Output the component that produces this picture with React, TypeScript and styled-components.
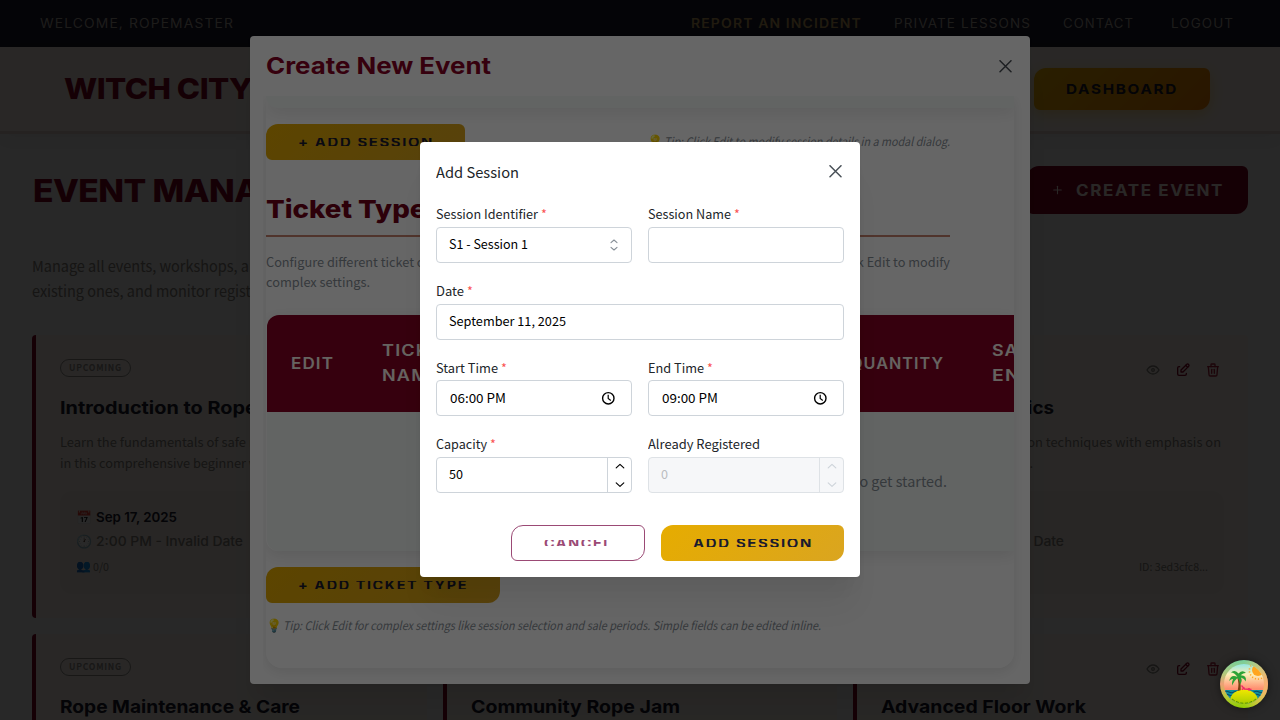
import React, { useLayoutEffect, useRef, useState } from 'react';
import styled, { createGlobalStyle, css } from 'styled-components';
import { TbEye, TbEdit, TbTrash, TbPlus } from 'react-icons/tb';

const display = "Inter, 'Open Sans', sans-serif";
const body = "'Noto Sans CJK SC', 'Noto Sans', sans-serif";

const Global = createGlobalStyle`
  * { box-sizing: border-box; }
  body { margin: 0; background: #fafafa; font-family: ${body}; }
  button { font: inherit; cursor: pointer; }
`;

/* Text stretched horizontally so that its label takes a set width. */
const FitOuter = styled.span<{ $w: number }>`
  display: inline-block;
  width: ${(p) => p.$w}px;
  text-align: left;
  white-space: nowrap;
  flex: none;
`;
const FitInner = styled.span`
  display: inline-block;
  transform-origin: 0 50%;
`;
function Fit({ w, tail, children }: { w: number; tail?: string; children: React.ReactNode }) {
  const ref = useRef<HTMLSpanElement>(null);
  const [scale, setScale] = useState(1);
  useLayoutEffect(() => {
    if (ref.current && ref.current.offsetWidth) {
      setScale(w / (ref.current.getBoundingClientRect().width || w));
    }
  }, [w]);
  return (
    <FitOuter $w={w}>
      <FitInner style={{ transform: `scaleX(${scale})` }}>
        <span ref={ref}>{children}</span>
        {tail}
      </FitInner>
    </FitOuter>
  );
}

const Page = styled.div`
  position: relative;
  width: 1280px;
  height: 720px;
  overflow: hidden;
  background: #fafafa;
`;
const Overlay = styled.div`
  position: absolute;
  inset: 0;
  display: flex;
  justify-content: center;
  align-items: center;
  background: rgba(0, 0, 0, 0.6);
`;
const UpperOverlay = styled(Overlay)`
  padding-bottom: 1px;
`;

/* ---------- page ---------- */
const UtilityBar = styled.div`
  height: 47px;
  padding: 0 46px 0 40px;
  display: flex;
  align-items: center;
  justify-content: space-between;
  background: #1a1a2e;
  color: #b8b0a8;
  font: 400 12.5px ${display};
  letter-spacing: 1px;
`;
const UtilityLinks = styled.nav`
  display: flex;
  align-items: center;
`;
const UtilityLink = styled.a<{ $gap?: number; $strong?: boolean }>`
  margin-left: ${(p) => p.$gap ?? 0}px;
  ${(p) => p.$strong && css`color: #c9a961; font-weight: 600;`}
`;
const Header = styled.header`
  height: 87px;
  padding: 0 70px 0 64px;
  display: flex;
  align-items: center;
  justify-content: space-between;
  background: #fff8f0;
  border-bottom: 3px solid #ebd6d2;
  box-shadow: 0 2px 20px rgba(0, 0, 0, 0.08);
`;
const Logo = styled.div`
  margin-top: -2px;
  font: 800 29px ${display};
  letter-spacing: -0.5px;
  color: #880124;
`;
const Dashboard = styled.button`
  width: 176px;
  height: 42px;
  padding: 0 32px;
  border: 0;
  border-radius: 12px 6px 12px 6px;
  background: linear-gradient(135deg, #ffbf00, #ff8c00);
  box-shadow: 0 4px 15px rgba(255, 191, 0, 0.4);
  color: #1a1a2e;
  font: 700 13.5px ${display};
  letter-spacing: 1.5px;
  text-align: left;
`;
const Main = styled.main`
  padding: 32px 32px 0;
`;
const TitleRow = styled.div`
  height: 48px;
  display: flex;
  align-items: center;
  justify-content: space-between;
`;
const PageTitle = styled.h1`
  margin: 0 0 0 1px;
  font: 800 31px ${display};
  letter-spacing: -0.5px;
  color: #880124;
`;
const CreateButton = styled.button`
  width: 221px;
  height: 48px;
  padding: 0 24px;
  display: flex;
  align-items: center;
  gap: 12px;
  border: 0;
  border-radius: 12px 6px 12px 6px;
  background: #880124;
  color: #fff8f0;
  font: 700 15.8px ${display};
  letter-spacing: 1.5px;
`;
const Intro = styled.p`
  margin: 39px 0 32px;
  font-size: 15px;
  line-height: 25px;
  color: #8b8680;
`;
const Line = styled.div`
  white-space: nowrap;
`;
const CardGrid = styled.div`
  display: grid;
  grid-template-columns: repeat(3, 1fr);
  gap: 16px;
`;
const Card = styled.article`
  height: 283px;
  padding: 24px;
  border-left: 4px solid #880124;
  border-radius: 4px;
  background: #fff8f0;
`;
const CardTop = styled.div`
  display: flex;
  justify-content: space-between;
  align-items: flex-start;
  height: 22px;
`;
const Badge = styled.span`
  height: 18px;
  padding: 0 8px;
  border: 1px solid #9a9490;
  border-radius: 9px;
  color: #9a9490;
  font-size: 9px;
  font-weight: 700;
  line-height: 15.5px;
  letter-spacing: 0.8px;
`;
const CardActions = styled.div`
  display: flex;
  align-items: center;
  gap: 14px;
  height: 22px;
  margin-right: 3px;
`;
const ActionIcon = styled.span<{ $color: string }>`
  display: flex;
  color: ${(p) => p.$color};
`;
const CardTitle = styled.h3`
  margin: 13.5px 0 10.5px;
  font: 700 17.6px/26px ${display};
  color: #1a1a2e;
  white-space: nowrap;
`;
const CardText = styled.p`
  height: 42px;
  margin: 0 0 17.5px;
  font-size: 12.6px;
  line-height: 21px;
  color: #8b8680;
`;
const Details = styled.div`
  padding: 14.5px 16px 15px;
  border-radius: 12px;
  background: #faf0e8;
`;
const DetailRow = styled.div<{ $kind: 'date' | 'time' | 'count' }>`
  display: flex;
  align-items: center;
  height: ${(p) => (p.$kind === 'count' ? 26 : 24)}px;
  gap: ${(p) => (p.$kind === 'count' ? 1 : 4)}px;
  ${(p) => p.$kind === 'date' && css`font: 600 13px ${display}; color: #1a1a2e;`}
  ${(p) => p.$kind === 'time' && css`font: 500 13px ${display}; color: #8b8680;`}
  ${(p) => p.$kind === 'count' && css`font-size: 11px; color: #8b8680;`}
`;
const Emoji = styled.span<{ $size?: number }>`
  width: 16px;
  flex: none;
  font: normal ${(p) => p.$size ?? 13}px 'Noto Color Emoji', sans-serif;
  letter-spacing: 0;
`;
const Push = styled.span`
  margin-left: auto;
`;

type EventInfo = {
  title: string;
  titleW: number;
  lines: { text: string; w: number; tail?: string }[];
  titleTail?: string;
};
const events: EventInfo[] = [
  {
    title: 'Introduction to Rop', titleW: 185, titleTail: 'e Bondage',
    lines: [
      { text: 'Learn the fundamentals of safe', w: 186, tail: ' rope bondage' },
      { text: 'in this comprehensive beginner', w: 186, tail: ' workshop.' },
    ],
  },
  { title: 'Midnight Rope Performance', titleW: 250, lines: [{ text: 'An evening of rope artistry', w: 160 }] },
  {
    title: 'Suspension Basics', titleW: 173,
    lines: [
      { text: 'Introduction to suspension techniques with emphasis on', w: 340 },
      { text: 'safety and body mechanics.', w: 152 },
    ],
  },
  { title: 'Rope Maintenance & Care', titleW: 240, lines: [] },
  { title: 'Community Rope Jam', titleW: 209, lines: [] },
  { title: 'Advanced Floor Work', titleW: 205, lines: [] },
];

function EventCard({ e }: { e: EventInfo }) {
  return (
    <Card>
      <CardTop>
        <Badge><Fit w={53}>UPCOMING</Fit></Badge>
        <CardActions>
          <ActionIcon $color="#8b8680"><TbEye size={16} /></ActionIcon>
          <ActionIcon $color="#880124"><TbEdit size={16} /></ActionIcon>
          <ActionIcon $color="#b0203c"><TbTrash size={16} /></ActionIcon>
        </CardActions>
      </CardTop>
      <CardTitle><Fit w={e.titleW} tail={e.titleTail}>{e.title}</Fit></CardTitle>
      <CardText>
        {e.lines.map((l) => (
          <Line key={l.text}><Fit w={l.w} tail={l.tail}>{l.text}</Fit></Line>
        ))}
      </CardText>
      <Details>
        <DetailRow $kind="date"><Emoji>📅</Emoji><Fit w={81}>Sep 17, 2025</Fit></DetailRow>
        <DetailRow $kind="time"><Emoji>🕐</Emoji><Fit w={147}>2:00 PM - Invalid Date</Fit></DetailRow>
        <DetailRow $kind="count">
          <Emoji $size={12}>👥</Emoji><Fit w={16}>0/0</Fit>
          <Push><Fit w={69}>ID: 3ed3cfc8...</Fit></Push>
        </DetailRow>
      </Details>
    </Card>
  );
}

/* ---------- shared dialog parts ---------- */
const Dialog = styled.section<{ $w: number; $h: number }>`
  width: ${(p) => p.$w}px;
  height: ${(p) => p.$h}px;
  padding: 0 16px 16px;
  border-radius: 4px;
  background: #fff;
  box-shadow: 0 1px 3px rgba(0, 0, 0, 0.05), 0 36px 28px -7px rgba(0, 0, 0, 0.05),
    0 17px 17px -7px rgba(0, 0, 0, 0.04);
`;
const DialogHeader = styled.div<{ $large?: boolean }>`
  height: 60px;
  padding: 0 2.5px ${(p) => (p.$large ? 0 : 1.5)}px 0;
  display: flex;
  align-items: center;
  justify-content: space-between;
  font: 400 14.4px ${body};
  color: #212529;
  ${(p) => p.$large && css`font: 700 23px ${display}; color: #880124;`}
`;
function CloseIcon() {
  return (
    <svg width="13" height="13" viewBox="0 0 13 13" fill="none" stroke="#495057" strokeWidth="1.5" strokeLinecap="round">
      <path d="M1 0.7L12 11.7M12 0.7L1 11.7" />
    </svg>
  );
}
const Action = styled.button<{ $w: number; $outline?: boolean }>`
  display: block;
  width: ${(p) => p.$w}px;
  height: 36px;
  padding: ${(p) => (p.$outline ? '14px 31.5px' : '14px 32px')};
  border: ${(p) => (p.$outline ? '1px solid #9b4a75' : '0')};
  border-radius: 12px 6px 12px 6px;
  background: ${(p) => (p.$outline ? '#fff' : 'linear-gradient(135deg, #e6ac00, #daa520)')};
  color: ${(p) => (p.$outline ? '#9b4a75' : '#1a1a2e')};
`;
const ActionLabel = styled.span<{ $h: number }>`
  display: flex;
  align-items: center;
  height: ${(p) => p.$h}px;
  overflow: hidden;
  font: 700 13.5px/14px ${display};
  letter-spacing: 1.5px;
`;

/* ---------- create event dialog ---------- */
const Paper = styled.div`
  height: 572px;
  border-radius: 0 0 16px 16px;
  overflow: hidden;
  background: #fff;
`;
const PaperShadow = styled.div`
  border-radius: 0 0 16px 16px;
  box-shadow: 0 4px 12px rgba(0, 0, 0, 0.09);
  clip-path: inset(0 -16px -16px -3px);
`;
const SessionTableEnd = styled.div`
  height: 12px;
  border-radius: 0 0 0 12px;
  background: #f5faf8;
  box-shadow: 0 4px 15px rgba(0, 0, 0, 0.1);
`;
const Tip = styled.div`
  display: flex;
  align-items: center;
  gap: 1px;
  height: 20px;
  font-size: 11.8px;
  line-height: 20px;
  font-style: italic;
  color: #868e96;
`;
const SessionRow = styled.div`
  width: 684px;
  margin-top: 16px;
  display: flex;
  align-items: center;
  justify-content: space-between;
  ${Tip} { margin-bottom: 2px; }
`;
const SectionTitle = styled.h2`
  width: 684px;
  margin: 29px 0 14.5px;
  padding-bottom: 6px;
  border-bottom: 2px solid #c8836f;
  font: 800 25px/40px ${display};
  color: #700018;
`;
const SectionText = styled.p`
  width: 684px;
  margin: 0 0 23.5px;
  font-size: 12.6px;
  line-height: 20px;
  color: #868e96;
`;
const SplitLine = styled.div`
  display: flex;
  justify-content: space-between;
`;
const TicketTable = styled.div`
  margin-left: 1px;
  border-radius: 12px 0 0 12px;
  overflow: hidden;
`;
const TableShadow = styled.div`
  margin-bottom: 16px;
  border-radius: 12px 0 0 12px;
  box-shadow: 0 4px 15px rgba(0, 0, 0, 0.1);
`;
const TableHead = styled.div`
  height: 97px;
  display: grid;
  grid-template-columns: 91px 468px 142px 120px;
  align-items: center;
  padding: 0 0 1px 24px;
  background: #880124;
  color: #fff8f0;
  font: 600 15.6px/25px ${display};
  letter-spacing: 1px;
`;
const TableEmpty = styled.div`
  height: 139px;
  padding: 0 67px 2px 0;
  display: flex;
  align-items: center;
  justify-content: flex-end;
  background: #f5faf8;
  color: #868e96;
  font-size: 14.4px;
`;
const BottomTip = styled.div`
  margin-top: 12px;
`;

/* ---------- add session dialog ---------- */
const Form = styled.div`
  padding-top: 3.3px;
  display: grid;
  grid-template-columns: 1fr 1fr;
  gap: 19px 16px;
`;
const Field = styled.div<{ $full?: boolean }>`
  grid-column: ${(p) => (p.$full ? '1 / -1' : 'auto')};
`;
const Label = styled.div`
  height: 21.7px;
  display: flex;
  gap: 3px;
  font-size: 12.6px;
  line-height: 18px;
  color: #212529;
`;
const Star = styled.span`
  color: #fa5252;
`;
const Control = styled.div<{ $disabled?: boolean; $time?: boolean }>`
  height: 36px;
  display: flex;
  align-items: center;
  justify-content: space-between;
  padding-left: ${(p) => (p.$time ? 13 : 12)}px;
  border: 1px solid ${(p) => (p.$disabled ? '#dee2e6' : '#ced4da')};
  border-radius: 4px;
  background: ${(p) => (p.$disabled ? '#f6f7f9' : '#fff')};
  color: ${(p) => (p.$disabled ? '#bbbdc0' : '#000')};
  font-size: 12.6px;
  line-height: 32px;
`;
const ControlValue = styled.span`
  display: flex;
  margin-bottom: 1.3px;
`;
const ControlIcon = styled.svg<{ $right: number }>`
  margin-right: ${(p) => p.$right}px;
`;
const Stepper = styled.div<{ $disabled?: boolean }>`
  width: 24px;
  height: 34px;
  display: flex;
  align-items: center;
  justify-content: center;
  border-left: 1px solid ${(p) => (p.$disabled ? '#dee2e6' : '#ced4da')};
  color: ${(p) => (p.$disabled ? '#ced4da' : '#000')};
`;
const Footer = styled.div`
  margin-top: 32px;
  display: flex;
  justify-content: flex-end;
  gap: 16px;
`;

function Chevrons() {
  return (
    <ControlIcon $right={12} width="10" height="14" viewBox="0 0 10 14" fill="none" stroke="#868e96" strokeWidth="1.1" strokeLinecap="round" strokeLinejoin="round">
      <path d="M2 4.7L5 2L8 4.7M2 9.3L5 12L8 9.3" />
    </ControlIcon>
  );
}
function Clock() {
  return (
    <ControlIcon $right={16} width="14" height="14" viewBox="0 0 14 14" fill="none" stroke="#000" strokeWidth="1.4">
      <circle cx="7.3" cy="7.3" r="5.7" />
      <path d="M7.2 3.8V7.5L9.8 9.4" strokeWidth="1.2" />
    </ControlIcon>
  );
}
function Steps({ disabled }: { disabled?: boolean }) {
  return (
    <Stepper $disabled={disabled}>
      <svg width="10" height="26" viewBox="0 0 10 26" fill="none" stroke="currentColor" strokeWidth="1.15" strokeLinecap="round" strokeLinejoin="round">
        <path d="M1.2 5.9L5 2.3L8.8 5.9M1.2 20.8L5 24.3L8.8 20.8" />
      </svg>
    </Stepper>
  );
}
function FormLabel({ w, text, required }: { w: number; text: string; required?: boolean }) {
  return <Label><Fit w={w}>{text}</Fit>{required && <Star>*</Star>}</Label>;
}

/* ---------- tropical badge ---------- */
const IslandButton = styled.div`
  position: absolute;
  right: 12px;
  bottom: 12px;
  width: 48px;
  height: 48px;
  border-radius: 50%;
  box-shadow: 0 0 8px rgba(0, 0, 0, 0.5);
`;
function Island() {
  return (
    <svg width="48" height="48" viewBox="0 0 48 48">
      <defs>
        <linearGradient id="ring" x1="0" y1="0" x2="0" y2="1">
          <stop offset="0" stopColor="#74cf9c" />
          <stop offset="0.3" stopColor="#b6c87a" />
          <stop offset="0.5" stopColor="#efa076" />
          <stop offset="0.75" stopColor="#b8c83c" />
          <stop offset="1" stopColor="#8fce00" />
        </linearGradient>
        <linearGradient id="ringRight" x1="0" y1="0" x2="1" y2="0">
          <stop offset="0.5" stopColor="#ffce6e" stopOpacity="0" />
          <stop offset="1" stopColor="#ffb070" stopOpacity="0.75" />
        </linearGradient>
        <linearGradient id="sky" x1="0" y1="0" x2="0" y2="1">
          <stop offset="0" stopColor="#6be2f2" />
          <stop offset="0.3" stopColor="#fdf0b8" />
          <stop offset="0.6" stopColor="#ff8f70" />
        </linearGradient>
        <linearGradient id="sand" x1="0" y1="0" x2="0" y2="1">
          <stop offset="0" stopColor="#f2e800" />
          <stop offset="1" stopColor="#7dbd00" />
        </linearGradient>
        <clipPath id="disc"><circle cx="24" cy="24" r="20" /></clipPath>
      </defs>
      <circle cx="24" cy="24" r="24" fill="url(#ring)" />
      <circle cx="24" cy="24" r="24" fill="url(#ringRight)" />
      <g clipPath="url(#disc)">
        <rect width="48" height="48" fill="url(#sky)" />
        <circle cx="38" cy="10.5" r="8.6" fill="none" stroke="#ffa51e" strokeWidth="1.6" strokeDasharray="1.1 2" />
        <circle cx="38" cy="10" r="6" fill="#ffa51e" />
        <rect y="30" width="48" height="18" fill="#0d8f9e" />
        <path d="M4 32q2.5-1.4 5 0t5 0 5 0 5 0 5 0 5 0 5 0 5 0M4 35q2.5-1.4 5 0t5 0 5 0 5 0 5 0 5 0 5 0 5 0" fill="none" stroke="#0a4d68" strokeWidth="1.1" />
        <ellipse cx="24" cy="41" rx="14" ry="11.5" fill="url(#sand)" />
        <path d="M12 39Q24 47.5 36 39" fill="none" stroke="#4c8b00" strokeWidth="0.9" strokeDasharray="3 1.6" />
      </g>
      <path d="M17 17Q19.5 23 17.6 31L20.6 30.3Q21.2 22 18.4 16.5Z" fill="#7b3f12" />
      <path d="M21.5 25.5L24.5 29L31.5 29.5M22 29.8L24.5 27.5M29 31V28" fill="none" stroke="#ee2c68" strokeWidth="1.3" />
      <path d="M17.5 17Q11 13.5 9 21Q12 18.5 13 19.2Q11.5 22 12 25.5Q14.2 20.5 17.5 18Q19.5 20 20 24.5Q23 20.5 20.8 17.6Q24.5 18.5 25.8 21.5Q27 15 20.5 15.2Q24 12.6 26 13Q22.5 9.3 18.5 13.6Q15.5 9.3 11 12.4Q14.8 12.6 17.5 17Z" fill="#2da336" />
    </svg>
  );
}

export default function App() {
  return (
    <Page>
      <Global />
      <UtilityBar>
        <Fit w={194}>WELCOME, ROPEMASTER</Fit>
        <UtilityLinks>
          <UtilityLink $strong><Fit w={171}>REPORT AN INCIDENT</Fit></UtilityLink>
          <UtilityLink $gap={32}><Fit w={137}>PRIVATE LESSONS</Fit></UtilityLink>
          <UtilityLink $gap={32}><Fit w={71}>CONTACT</Fit></UtilityLink>
          <UtilityLink $gap={37}><Fit w={63}>LOGOUT</Fit></UtilityLink>
        </UtilityLinks>
      </UtilityBar>
      <Header>
        <Logo><Fit w={188} tail=" ROPE">WITCH CITY</Fit></Logo>
        <Dashboard><Fit w={112}>DASHBOARD</Fit></Dashboard>
      </Header>
      <Main>
        <TitleRow>
          <PageTitle><Fit w={225} tail="GEMENT">EVENT MANA</Fit></PageTitle>
          <CreateButton><TbPlus size={14} /><Fit w={148}>CREATE EVENT</Fit></CreateButton>
        </TitleRow>
        <Intro>
          <Line><Fit w={217} tail="nd performances.">Manage all events, workshops, a</Fit></Line>
          <Line><Fit w={219} tail="rations.">existing ones, and monitor regist</Fit></Line>
        </Intro>
        <CardGrid>
          {events.map((e) => <EventCard key={e.title} e={e} />)}
        </CardGrid>
      </Main>

      <Overlay>
        <Dialog $w={780} $h={648}>
          <DialogHeader $large><Fit w={225}>Create New Event</Fit><CloseIcon /></DialogHeader>
          <PaperShadow>
            <Paper>
              <SessionTableEnd />
              <SessionRow>
                <Action $w={199}><ActionLabel $h={8}><Fit w={136}>+ ADD SESSION</Fit></ActionLabel></Action>
                <Tip><Emoji>💡</Emoji><Fit w={286}>Tip: Click Edit to modify session details in a modal dialog.</Fit></Tip>
              </SessionRow>
              <SectionTitle><Fit w={86} tail=" Types">Ticket</Fit></SectionTitle>
              <SectionText>
                <SplitLine>
                  <Fit w={148} tail=" options for your event.">Configure different ticket</Fit>
                  <Fit w={115}>Click Edit to modify</Fit>
                </SplitLine>
                <Line><Fit w={104}>complex settings.</Fit></Line>
              </SectionText>
              <TableShadow>
                <TicketTable>
                  <TableHead>
                    <Fit w={43}>EDIT</Fit>
                    <div><Line><Fit w={73}>TICKET</Fit></Line><Line><Fit w={59}>NAME</Fit></Line></div>
                    <Fit w={94}>QUANTITY</Fit>
                    <div><Line><Fit w={50}>SALE</Fit></Line><Line><Fit w={58}>ENDS</Fit></Line></div>
                  </TableHead>
                  <TableEmpty>No ticket types added yet. Use the button below to get started.</TableEmpty>
                </TicketTable>
              </TableShadow>
              <Action $w={234}><ActionLabel $h={8}><Fit w={170}>+ ADD TICKET TYPE</Fit></ActionLabel></Action>
              <BottomTip>
                <Tip>
                  <Emoji>💡</Emoji>
                  <Fit w={538}>Tip: Click Edit for complex settings like session selection and sale periods. Simple fields can be edited inline.</Fit>
                </Tip>
              </BottomTip>
            </Paper>
          </PaperShadow>
        </Dialog>
      </Overlay>

      <UpperOverlay>
        <Dialog $w={440} $h={435}>
          <DialogHeader><Fit w={83}>Add Session</Fit><CloseIcon /></DialogHeader>
          <Form>
            <Field>
              <FormLabel w={102} text="Session Identifier" required />
              <Control><ControlValue><Fit w={79}>S1 - Session 1</Fit></ControlValue><Chevrons /></Control>
            </Field>
            <Field>
              <FormLabel w={83} text="Session Name" required />
              <Control />
            </Field>
            <Field $full>
              <FormLabel w={28} text="Date" required />
              <Control><ControlValue><Fit w={117}>September 11, 2025</Fit></ControlValue></Control>
            </Field>
            <Field>
              <FormLabel w={62} text="Start Time" required />
              <Control $time><ControlValue><Fit w={56}>06:00 PM</Fit></ControlValue><Clock /></Control>
            </Field>
            <Field>
              <FormLabel w={56} text="End Time" required />
              <Control $time><ControlValue><Fit w={56}>09:00 PM</Fit></ControlValue><Clock /></Control>
            </Field>
            <Field>
              <FormLabel w={51} text="Capacity" required />
              <Control><ControlValue><Fit w={14}>50</Fit></ControlValue><Steps /></Control>
            </Field>
            <Field>
              <FormLabel w={112} text="Already Registered" />
              <Control $disabled><ControlValue><Fit w={7}>0</Fit></ControlValue><Steps disabled /></Control>
            </Field>
          </Form>
          <Footer>
            <Action $w={134} $outline><ActionLabel $h={6}><Fit w={69}>CANCEL</Fit></ActionLabel></Action>
            <Action $w={183}><ActionLabel $h={8}><Fit w={120}>ADD SESSION</Fit></ActionLabel></Action>
          </Footer>
        </Dialog>
      </UpperOverlay>

      <IslandButton><Island /></IslandButton>
    </Page>
  );
}
